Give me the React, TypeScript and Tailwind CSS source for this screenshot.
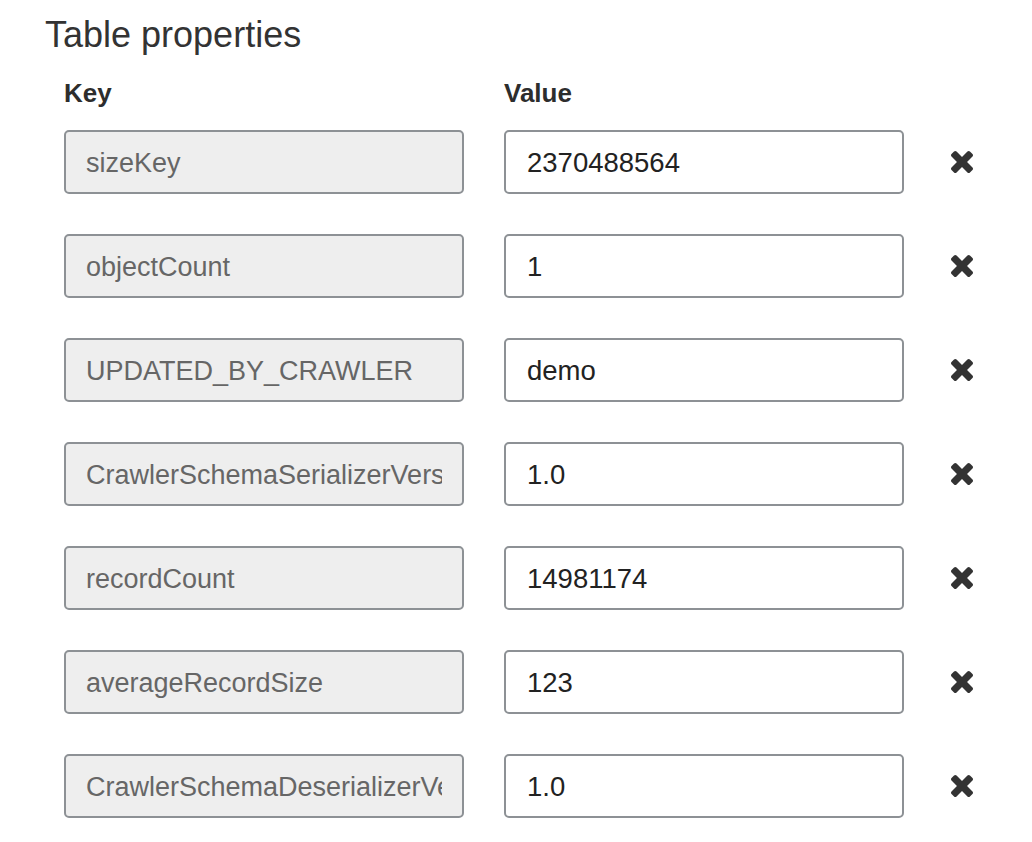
const properties = [
  { key: "sizeKey", value: "2370488564" },
  { key: "objectCount", value: "1" },
  { key: "UPDATED_BY_CRAWLER", value: "demo" },
  { key: "CrawlerSchemaSerializerVersion", value: "1.0" },
  { key: "recordCount", value: "14981174" },
  { key: "averageRecordSize", value: "123" },
  { key: "CrawlerSchemaDeserializerVersion", value: "1.0" },
];

// heavy "times" glyph, font-awesome 4 style
function RemoveIcon() {
  return (
    <svg width="22" height="22" viewBox="110 366 1188 1188" fill="#333333">
      <path d="M1298 1322q0 40-28 68l-136 136q-28 28-68 28t-68-28l-294-294-294 294q-28 28-68 28t-68-28l-136-136q-28-28-28-68t28-68l294-294-294-294q-28-28-28-68t28-68l136-136q28-28 68-28t68 28l294 294 294-294q28-28 68-28t68 28l136 136q28 28 28 68t-28 68l-294 294 294 294q28 28 28 68z" />
    </svg>
  );
}

export default function App() {
  return (
    <div className="min-h-screen bg-white pl-[45px] pt-[14px] font-['Liberation_Sans',Arial,sans-serif]">
      <h2 className="text-[36px] leading-[41px] text-[#333333]">Table properties</h2>

      <div className="ml-[19px] mt-[23px]">
        <div className="flex gap-[40px] text-[26px] leading-[30px] font-bold text-[#2d2d2d]">
          <div className="w-[400px]">Key</div>
          <div className="w-[400px]">Value</div>
        </div>

        <div className="mt-[22px] flex flex-col gap-[40px]">
          {properties.map((p) => (
            <div key={p.key} className="flex items-center">
              <input
                readOnly
                defaultValue={p.key}
                className="w-[400px] h-[64px] rounded-[5px] border-2 border-[#8d9195] bg-[#eeeeee] px-[20px] pt-[2px] text-[27px] text-[#666666] outline-none"
              />
              <input
                defaultValue={p.value}
                className="ml-[40px] w-[400px] h-[64px] rounded-[5px] border-2 border-[#8d9195] bg-white px-[21px] pt-[2px] text-[27.5px] text-[#222222] outline-none"
              />
              <button className="ml-[47px] flex items-center justify-center">
                <RemoveIcon />
              </button>
            </div>
          ))}
        </div>
      </div>
    </div>
  );
}
